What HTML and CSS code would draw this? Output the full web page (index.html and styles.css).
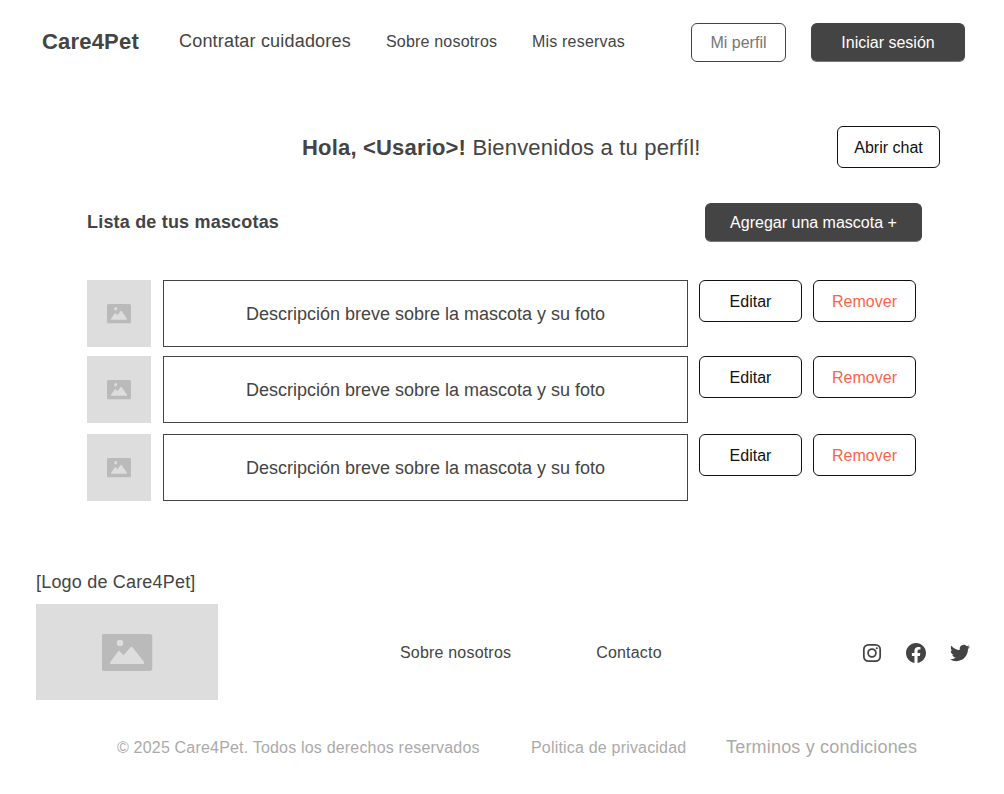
FILE: index.html
```html
<!DOCTYPE html>
<html lang="es">
<head>
<meta charset="utf-8">
<title>Care4Pet</title>
<link rel="stylesheet" href="styles.css">
</head>
<body>
<svg class="defs" width="0" height="0">
  <symbol id="picture" viewBox="0 0 51 37" preserveAspectRatio="none">
    <rect width="51" height="37" rx="3" fill="#bababa"/>
    <circle cx="18.5" cy="9" r="3.2" fill="#ddd"/>
    <path d="M9.3 30Q7.8 30 8.8 28L16.5 17.5Q17.5 16.2 18.5 17.5L22 21.3L29 13.3Q30 12.3 31 13.3L42.2 27.5Q43.200 30 41.500 30Z" fill="#ddd"/>
  </symbol>
</svg>
<header class="header">
  <a class="brand">Care4Pet</a>
  <nav class="nav">
    <a class="nav-current">Contratar cuidadores</a>
    <a class="nav-about">Sobre nosotros</a>
    <a class="nav-bookings">Mis reservas</a>
  </nav>
  <div class="account">
    <button class="btn btn-profile">Mi perfil</button>
    <button class="btn btn-dark btn-login">Iniciar sesión</button>
  </div>
</header>
<main>
  <section class="welcome">
    <h1><strong>Hola, &lt;Usario&gt;!</strong> Bienvenidos a tu perfíl!</h1>
    <button class="btn btn-line">Abrir chat</button>
  </section>
  <section class="list-head">
    <h2>Lista de tus mascotas</h2>
    <button class="btn btn-dark btn-add">Agregar una mascota +</button>
  </section>
  <ul class="pets">
    <li class="pet">
      <div class="photo"><svg><use href="#picture"/></svg></div>
      <p class="description">Descripción breve sobre la mascota y su foto</p>
      <button class="btn btn-line">Editar</button>
      <button class="btn btn-line btn-remove">Remover</button>
    </li>
    <li class="pet">
      <div class="photo"><svg><use href="#picture"/></svg></div>
      <p class="description">Descripción breve sobre la mascota y su foto</p>
      <button class="btn btn-line">Editar</button>
      <button class="btn btn-line btn-remove">Remover</button>
    </li>
    <li class="pet">
      <div class="photo"><svg><use href="#picture"/></svg></div>
      <p class="description">Descripción breve sobre la mascota y su foto</p>
      <button class="btn btn-line">Editar</button>
      <button class="btn btn-line btn-remove">Remover</button>
    </li>
  </ul>
</main>
<footer class="footer">
  <p class="logo-label">[Logo de Care4Pet]</p>
  <div class="footer-main">
    <div class="logo"><svg><use href="#picture"/></svg></div>
    <nav class="footer-nav">
      <a>Sobre nosotros</a>
      <a>Contacto</a>
    </nav>
    <div class="social">
      <svg viewBox="0 0 24 24" fill="none" stroke="#444" stroke-width="2.1"><rect x="2.200" y="2.200" width="19.600" height="19.600" rx="5.500"/><circle cx="12" cy="12" r="4.700"/><circle cx="17.700" cy="6.300" r="1.300" fill="#444" stroke="none"/></svg>
      <svg viewBox="0 0 24 24" fill="#444"><path d="M24 12.073c0-6.627-5.373-12-12-12s-12 5.373-12 12c0 5.990 4.388 10.954 10.125 11.854v-8.385H7.078v-3.470h3.047V9.430c0-3.007 1.792-4.669 4.533-4.669 1.312 0 2.686.235 2.686.235v2.953H15.830c-1.491 0-1.956.925-1.956 1.874v2.250h3.328l-.532 3.470h-2.796v8.385C19.612 23.027 24 18.062 24 12.073z"/></svg>
      <svg viewBox="0 0 24 24" fill="#444"><path d="M23.953 4.570a10 10 0 01-2.825.775 4.958 4.958 0 002.163-2.723c-.951.555-2.005.959-3.127 1.184a4.920 4.920 0 00-8.384 4.482C7.690 8.095 4.067 6.130 1.640 3.162a4.822 4.822 0 00-.666 2.475c0 1.710.870 3.213 2.188 4.096a4.904 4.904 0 01-2.228-.616v.060a4.923 4.923 0 003.946 4.827 4.996 4.996 0 01-2.212.085 4.936 4.936 0 004.604 3.417 9.867 9.867 0 01-6.102 2.105c-.390 0-.779-.023-1.170-.067a13.995 13.995 0 007.557 2.209c9.053 0 13.998-7.496 13.998-13.985 0-.210 0-.420-.015-.630A9.935 9.935 0 0024 4.590z"/></svg>
    </div>
  </div>
  <div class="legal">
    <span class="copyright">© 2025 Care4Pet. Todos los derechos reservados</span>
    <a class="privacy">Politica de privacidad</a>
    <a class="terms">Terminos y condiciones</a>
  </div>
</footer>
</body>
</html>
```
FILE: styles.css
```css
* { box-sizing: border-box; }
body {
  margin: 0;
  background: #fff;
  color: #444;
  font: 16px/20px "Liberation Sans", Arial, sans-serif;
  letter-spacing: .19px;
  white-space: nowrap;
}
h1, h2, p, ul { margin: 0; padding: 0; font-weight: 400; }
.defs { display: block; }
.header { display: flex; align-items: center; height: 82px; padding: 0 39px 0 42px; }
.brand { width: 137px; padding-top: 2px; font-size: 22px; font-weight: 700; }
.nav { display: flex; align-items: center; }
.nav-current { width: 207px; font-size: 18px; }
.nav-about { width: 146px; padding-top: 2px; }
.nav-bookings { padding-top: 2px; }
.account { display: flex; gap: 25px; margin: 3px 0 0 auto; }
.btn {
  height: 42px;
  padding: 0;
  border: 1px solid #111;
  border-radius: 6px;
  background: #fff;
  color: #111;
  font: 16px/20px "Liberation Sans", Arial, sans-serif;
  letter-spacing: 0;
}
.btn-line { width: 103px; padding-top: 2px; }
.btn-remove { color: #ff6347; }
.btn-profile { width: 95px; height: 39px; border-color: #444; color: #777; }
.btn-dark { height: 39px; border-color: #444 #444 #777; background: #444; color: #fff; }
.btn-login { width: 154px; }
.btn-add { width: 217px; }
.welcome { display: flex; justify-content: space-between; align-items: center; margin-top: 44px; padding: 0 64px 0 302px; }
.welcome h1 { padding-top: 2px; font-size: 22px; letter-spacing: .18px; }
.list-head { display: flex; justify-content: space-between; align-items: center; margin-top: 35px; padding: 0 82px 0 87px; }
.list-head h2 { padding-bottom: 2px; font-size: 18px; font-weight: 700; }
.pets { display: grid; grid-template-rows: 67px 67px 67px; row-gap: 9px; padding: 38px 0 0 87px; list-style: none; }
.pet { display: flex; align-items: flex-start; }
.pet:last-child { margin-top: 2px; margin-bottom: -2px; }
.photo { display: flex; align-items: flex-start; justify-content: center; width: 64px; height: 67px; margin-right: 12px; padding-top: 24px; background: #ddd; }
.photo svg { width: 24px; height: 20px; padding-bottom: .5px; }
.description { width: 525px; height: 67px; margin-right: 11px; padding-top: 1px; border: 1px solid #444; font-size: 18px; line-height: 64px; letter-spacing: 0; text-align: center; }
.pet .btn-remove { margin-left: 11px; }
.footer { padding: 73px 34px 0 36px; }
.logo-label { font-size: 18px; }
.footer-main { display: flex; align-items: center; margin-top: 12px; }
.logo { display: flex; align-items: center; justify-content: center; width: 182px; height: 96px; background: #ddd; }
.logo svg { width: 52px; height: 37px; padding: 0 .5px; }
.footer-nav { display: flex; gap: 85px; margin-left: 182px; padding-top: 2px; }
.social { display: flex; align-items: center; gap: 24px; margin: 2px 0 0 auto; }
.social svg { width: 20px; height: 20px; }
.legal { display: flex; align-items: center; height: 20px; margin-top: 37px; padding-left: 81px; color: #aaa; }
.copyright { width: 414px; padding-top: 2px; }
.privacy { width: 195px; padding-top: 2px; }
.terms { font-size: 18px; }
```
